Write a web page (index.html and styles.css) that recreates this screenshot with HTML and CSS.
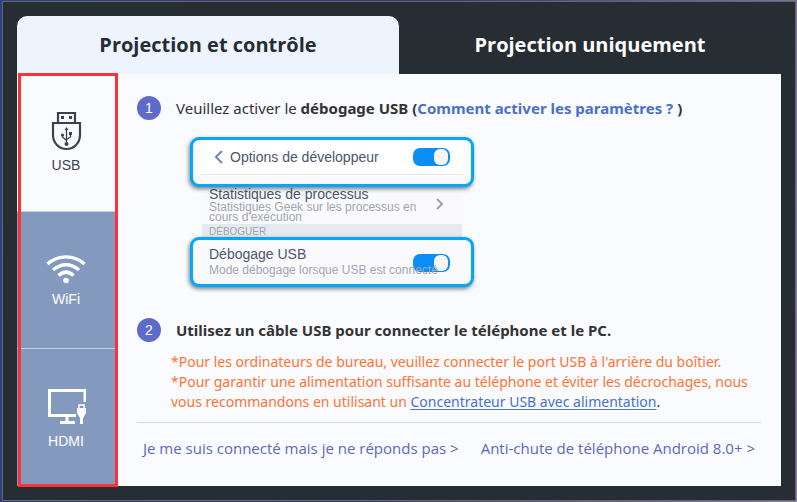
FILE: index.html
```html
<!DOCTYPE html>
<html lang="fr">
<head>
    <meta charset="UTF-8">
    <meta name="viewport" content="width=device-width, initial-scale=1.0">
    <title>Projection et contrôle</title>
    <link rel="stylesheet" href="styles.css">
</head>
<body>
    <div class="window">
        <!-- Onglets -->
        <div class="tabs">
            <button class="tab active" type="button">Projection et contrôle</button>
            <button class="tab" type="button">Projection uniquement</button>
        </div>

        <div class="panel">
            <!-- Modes de connexion -->
            <nav class="sidebar">
                <button class="mode active" type="button">
                    <svg class="mode-icon" width="40" height="40" viewBox="0 0 40 40" fill="none" stroke="currentColor" stroke-width="2.2">
                        <path d="M12 11V2h17v9"/>
                        <path d="M7 12h27v12c0 8-6 14-13.500 14S7 32 7 24z"/>
                        <g fill="currentColor" stroke="none">
                            <rect x="15" y="5" width="3" height="3"/>
                            <rect x="23" y="5" width="3" height="3"/>
                            <path d="M20.500 16l2 3h-4z"/>
                            <circle cx="20.500" cy="33" r="2"/>
                            <circle cx="16.500" cy="24" r="1.600"/>
                            <rect x="23" y="21" width="3" height="3"/>
                        </g>
                        <path d="M20.500 18v14M16.500 24v2l4 3.500M24.500 23v3l-4 2.500" stroke-width="1.300"/>
                    </svg>
                    <span>USB</span>
                </button>
                <button class="mode" type="button">
                    <svg class="mode-icon" width="40" height="32" viewBox="0 6 40 32" fill="none" stroke="currentColor" stroke-width="3.400">
                        <path d="M1.500 17c10.500-9.500 26.500-9.500 37 0"/>
                        <path d="M7 23c8-7 18-7 26 0"/>
                        <path d="M12.500 28.500c5-4.500 10-4.500 15 0"/>
                        <circle cx="20" cy="33.500" r="2.800" fill="currentColor" stroke="none"/>
                    </svg>
                    <span>WiFi</span>
                </button>
                <button class="mode" type="button">
                    <svg class="mode-icon" width="40" height="40" viewBox="-1 3 40 40" fill="none" stroke="currentColor">
                        <path d="M38 18V6.500H2.500v25H29" stroke-width="3"/>
                        <path d="M20 32v6M13 38.500h15" stroke-width="3"/>
                        <path d="M32 26v-5h5v5" stroke-width="1.500"/>
                        <path d="M30 24h9v5l-3 5v6h-3v-6l-3-5z" fill="currentColor" stroke="none"/>
                    </svg>
                    <span>HDMI</span>
                </button>
                <div class="sidebar-highlight"></div>
            </nav>

            <main class="content">
                <div class="step">
                    <span class="step-number">1</span>
                    <p class="step-text">Veuillez activer le <b>débogage USB (<a class="help-link" href="#">Comment activer les paramètres ? </a>)</b></p>
                </div>

                <div class="phone">
                    <div class="phone-box">
                        <div class="phone-header">
                            <svg width="8" height="14" viewBox="0 0 8 14" fill="none" stroke="#7485b5" stroke-width="2"><path d="M7 1L1 7l6 6"/></svg>
                            <label class="phone-title" for="devOptions">Options de développeur</label>
                            <input class="switch" type="checkbox" id="devOptions" checked>
                        </div>
                    </div>
                    <div class="phone-middle">
                        <div class="phone-row">
                            <div>
                                <div class="phone-title">Statistiques de processus</div>
                                <div class="phone-desc">Statistiques Geek sur les processus en cours d'exécution</div>
                            </div>
                            <svg width="8" height="12" viewBox="0 0 8 12" fill="none" stroke="#9ba1ad" stroke-width="2"><path d="M1 1l5 5-5 5"/></svg>
                        </div>
                        <div class="phone-section">DÉBOGUER</div>
                    </div>
                    <div class="phone-box phone-debug">
                        <label class="phone-title" for="usbDebug">Débogage USB</label>
                        <div class="phone-caption">Mode débogage lorsque USB est connecté</div>
                        <input class="switch" type="checkbox" id="usbDebug" checked>
                    </div>
                </div>

                <div class="step">
                    <span class="step-number">2</span>
                    <p class="step-text"><b>Utilisez un câble USB pour connecter le téléphone et le PC.</b></p>
                </div>

                <div class="notes">
                    <p>*Pour les ordinateurs de bureau, veuillez connecter le port USB à l'arrière du boîtier.</p>
                    <p>*Pour garantir une alimentation suffisante au téléphone et éviter les décrochages, nous vous recommandons en utilisant un <a href="#">Concentrateur USB avec alimentation</a><span class="dot">.</span></p>
                </div>

                <div class="links">
                    <a href="#">Je me suis connecté mais je ne réponds pas &gt;</a>
                    <a href="#">Anti-chute de téléphone Android 8.0+ &gt;</a>
                </div>
            </main>
        </div>
    </div>
</body>
</html>
```
FILE: styles.css
```css
* {
    margin: 0;
    padding: 0;
    box-sizing: border-box;
}

body {
    min-height: 100vh;
    display: flex;
    padding: 1px 1px 1px 2px;
    font-family: "Noto Sans", "Open Sans", sans-serif;
    font-size: 15px;
    line-height: 20px;
    color: #333;
    background: linear-gradient(100deg, #2a4388 0%, #323a70 50%, #8d7fab 100%);
}

button {
    border: none;
    font: inherit;
    cursor: pointer;
}

.window {
    flex: 1;
    display: flex;
    flex-direction: column;
    padding: 14px;
    border: 1px solid #66666c;
    background: #262d33;
}

/* Onglets */
.tabs {
    display: flex;
}

.tab {
    flex: 1;
    height: 58px;
    background: transparent;
    color: #fff;
    font-family: "Open Sans", sans-serif;
    font-size: 20px;
    font-weight: 700;
    border-radius: 10px 10px 0 0;
}

.tab.active {
    background: #edf4fe;
    color: #262d33;
}

.panel {
    flex: 1;
    display: flex;
    background: #fafbff;
}

/* Barre de gauche */
.sidebar {
    position: relative;
    width: 98px;
    display: flex;
    flex-direction: column;
}

.mode {
    flex: 1;
    display: flex;
    flex-direction: column;
    align-items: center;
    justify-content: center;
    gap: 4px;
    padding-top: 2px;
    background: #8499be;
    color: #fff;
    font-family: "Liberation Sans", Arial, sans-serif;
    font-size: 14px;
    border-top: 1px solid #c3cfe3;
}

.mode.active {
    background: #fafbff;
    color: #3a434b;
    border-top: none;
}

.mode-icon {
    display: block;
}

.sidebar-highlight {
    position: absolute;
    top: -1px;
    right: -3px;
    bottom: -1px;
    left: 1px;
    border: 3px solid #fb3338;
    pointer-events: none;
}

/* Contenu */
.content {
    flex: 1;
    padding: 22px 20px 0 22px;
}

.step {
    display: flex;
    align-items: center;
    gap: 15px;
}

.step-number {
    width: 24px;
    height: 24px;
    border-radius: 50%;
    background: #5f6bcb;
    color: #fff;
    font-family: "Liberation Sans", Arial, sans-serif;
    font-size: 14px;
    line-height: 24px;
    text-align: center;
}

.help-link {
    color: #4a70ca;
    text-decoration: none;
}

/* Illustration du téléphone */
.phone {
    width: 284px;
    margin: 17px 0 31px 53px;
    font-family: "Liberation Sans", Arial, sans-serif;
    font-size: 14px;
    line-height: 16px;
    color: #4b566e;
}

.phone-box {
    position: relative;
    height: 50px;
    padding: 0 8px;
    border: 3px solid #00a8fc;
    border-radius: 9px;
    background: #fafafc;
    box-shadow: -1px 2px 4px rgba(0, 0, 0, 0.5);
}

.phone-header {
    display: flex;
    align-items: center;
    gap: 7px;
    height: 35px;
    padding: 0 13px 0 14px;
    background: #fff;
    border-bottom: 1px solid #e6e6e9;
}

.phone-header .switch {
    margin-left: auto;
}

.phone-middle {
    margin: 0 12px;
    background: #fafafc;
}

.phone-row {
    display: flex;
    align-items: center;
    justify-content: space-between;
    height: 37px;
    padding: 0 18px 4px 7px;
}

.phone-desc {
    width: 215px;
    font-size: 12px;
    line-height: 10px;
    color: #a1a5b0;
}

.phone-section {
    height: 13px;
    padding-left: 7px;
    background: #e6eaf0;
    color: #9ca3b1;
    font-size: 10px;
    line-height: 15px;
}

.phone-debug {
    padding: 6px 16px;
}

.phone-debug .phone-title {
    display: block;
}

.phone-caption {
    position: relative;
    z-index: 1;
    font-size: 12px;
    color: #a1a5b0;
}

.phone-debug .switch {
    position: absolute;
    top: 14px;
    right: 21px;
}

.switch {
    appearance: none;
    display: flex;
    justify-content: flex-end;
    width: 37px;
    height: 18px;
    padding: 1px 2px;
    border-radius: 7px;
    background: #0b8ef5;
    cursor: pointer;
}

.switch::before {
    content: "";
    width: 14px;
    border-radius: 6px;
    background: #f6f6f8;
}

.switch:not(:checked) {
    justify-content: flex-start;
    background: #b4bac6;
}

/* Remarques */
.notes {
    margin: 10px 0 10px 34px;
    font-size: 14px;
    color: #ff7332;
}

.notes a {
    color: #4a70ca;
    text-underline-offset: 2px;
}

.notes .dot {
    color: #333;
}

.links {
    display: flex;
    justify-content: space-between;
    padding: 15px 6px;
    border-top: 1px solid #c9dcec;
    font-family: "Open Sans", sans-serif;
}

.links a {
    color: #5b68c0;
    text-decoration: none;
}
```
